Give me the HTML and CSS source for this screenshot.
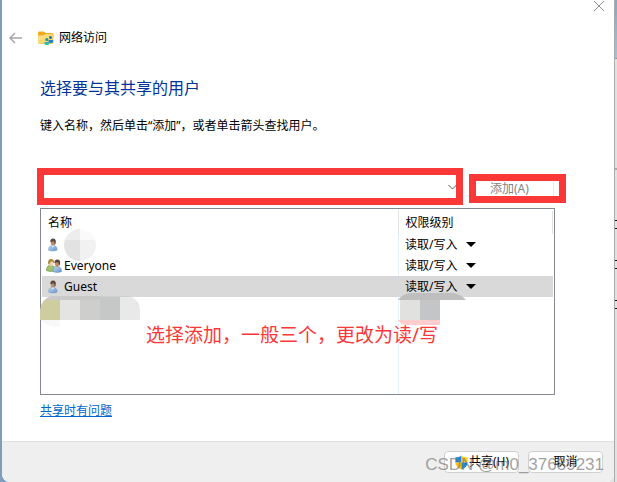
FILE: index.html
```html
<!DOCTYPE html>
<html lang="zh-CN">
<head>
    <meta charset="UTF-8">
    <meta name="viewport" content="width=device-width, initial-scale=1.0">
    <title>网络访问</title>
    <link rel="stylesheet" href="styles.css">
</head>
<body>
    <svg class="defs" width="0" height="0" aria-hidden="true">
        <defs>
            <linearGradient id="shirt" x1="0" y1="0" x2="1" y2="1">
                <stop offset="0" stop-color="#c3daf2"/>
                <stop offset="1" stop-color="#6193c8"/>
            </linearGradient>
            <linearGradient id="folder" x1="0" y1="0" x2="1" y2="1">
                <stop offset="0" stop-color="#ffe596"/>
                <stop offset="1" stop-color="#fbcb4c"/>
            </linearGradient>
            <symbol id="user" viewBox="0 0 16 16">
                <path d="M2.4 13c0-2.6 1.2-4 2.8-4.500h3.200c1.800.5 2.800 2 2.800 4.500-1.800 1.300-7 1.300-8.800 0z" fill="url(#shirt)" stroke="#7fa3c9" stroke-width=".5"/>
                <path d="M5.600 8.600l1.200 2 1.400-2z" fill="#f1f5fa"/>
                <ellipse cx="6.800" cy="5.600" rx="2" ry="3" fill="#c08a62"/>
                <path d="M4.300 5C4 2.800 5.400 1.500 7 1.500c2 0 3.100 1.400 2.800 3.900-.2 1.300-.6 2.200-1.300 2.800.1-1.900 0-3-.8-3.900-1 .4-2.200.5-3.400.7z" fill="#584840"/>
            </symbol>
            <symbol id="users" viewBox="0 0 16 16">
                <path d="M.5 12.500C.5 9.500 1.600 8 3.200 7.500h3c2 .5 3 2 3 5-2 1.200-6.700 1.200-8.700 0z" fill="#9fc46c" stroke="#5f8c3a" stroke-width=".6"/>
                <ellipse cx="5" cy="4.800" rx="2.400" ry="3.200" fill="#f0d3a8"/>
                <path d="M2.200 6C1.600 3 2.800 1 5 1s3.500 1.500 3 4c-.8-.4-1.500-1.200-1.800-2C5 4 3.500 4 3.300 6.800z" fill="#a9853c"/>
                <path d="M6.800 13.500c0-3 1.200-4.500 2.700-5h2.800c2 .5 3.200 2.200 3.200 5-2 1.200-6.700 1.200-8.700 0z" fill="url(#shirt)" stroke="#5b86b4" stroke-width=".5"/>
                <ellipse cx="11" cy="5.600" rx="2.200" ry="3.100" fill="#c08a62"/>
                <path d="M8.400 5C8.200 2.700 9.700 1.500 11.200 1.500c2.200 0 3.300 1.600 2.900 4-.2 1.200-.6 2-1.200 2.400.1-2-.3-3.200-1-3.900-1.200.5-2.300.8-3.500 1z" fill="#53403a"/>
            </symbol>
        </defs>
    </svg>

    <main class="dialog">
        <button class="close" aria-label="关闭">
            <svg width="12" height="12" viewBox="0 0 12 12"><path d="M1 1l10 10M11 1L1 11" stroke="#8c8c8c" fill="none"/></svg>
        </button>

        <header class="nav">
            <button class="back" aria-label="返回">
                <svg width="14" height="12" viewBox="0 0 14 12"><path d="M13 6H2M6 1L1 6l5 5" stroke="#a6a6a6" stroke-width="1.500" fill="none"/></svg>
            </button>
            <svg class="folder" width="17" height="16" viewBox="0 0 17 16">
                <path d="M1 3a1.500 1.500 0 0 1 1.500-1.500h4L8.500 3H15a1.500 1.500 0 0 1 1.500 1.500V7H1z" fill="#f0a91c"/>
                <path d="M1 5.500h5.500L8.500 4H15a1.500 1.500 0 0 1 1.500 1.500v7A1.500 1.500 0 0 1 15 14H2.500A1.500 1.500 0 0 1 1 12.500z" fill="url(#folder)"/>
                <circle cx="13.500" cy="7.500" r="1.500" fill="#1d6fc0"/>
                <path d="M11.500 10h4.700v1.500c0 2-4.700 2-4.700 0z" fill="#2380d2"/>
                <circle cx="9.800" cy="9.500" r="1.500" fill="#1695a3"/>
                <path d="M7.500 12h4.700v1.500c0 2-4.700 2-4.700 0z" fill="#28bcae"/>
            </svg>
            <span>网络访问</span>
        </header>

        <section class="content">
            <h1>选择要与其共享的用户</h1>
            <label class="hint" for="user-name">键入名称，然后单击“添加”，或者单击箭头查找用户。</label>

            <div class="picker">
                <div class="mark mark-name">
                    <select id="user-name"><option></option></select>
                    <svg class="chevron" width="9" height="6" viewBox="0 0 9 6"><path d="M.5 1l4 4 4-4" stroke="#555" fill="none"/></svg>
                </div>
                <div class="mark mark-add">
                    <button class="add" disabled>添加(A)</button>
                </div>
            </div>

            <div class="list">
                <table>
                    <colgroup><col class="col-name"><col></colgroup>
                    <thead>
                        <tr><th>名称</th><th>权限级别</th></tr>
                    </thead>
                    <tbody>
                        <tr>
                            <td><div class="name"><svg width="16" height="16"><use href="#user"/></svg></div></td>
                            <td><button class="level">读取/写入<i></i></button></td>
                        </tr>
                        <tr>
                            <td><div class="name"><svg width="16" height="16"><use href="#users"/></svg>Everyone</div></td>
                            <td><button class="level">读取/写入<i></i></button></td>
                        </tr>
                        <tr class="selected">
                            <td><div class="name"><svg width="16" height="16"><use href="#user"/></svg>Guest</div></td>
                            <td><button class="level">读取/写入<i></i></button></td>
                        </tr>
                    </tbody>
                </table>
                <!-- 打码区域 -->
                <svg class="blur blur-user" width="32" height="32" viewBox="0 0 32 32">
                    <clipPath id="round"><circle cx="16" cy="16" r="16"/></clipPath>
                    <g clip-path="url(#round)">
                        <path d="M0 0h16v11H0z" fill="#ededed"/>
                        <path d="M16 0h16v11H16z" fill="#fafafa"/>
                        <path d="M0 11h16v21H0z" fill="#e2e2e2"/>
                        <path d="M16 11h16v21H16z" fill="#f1f1f1"/>
                    </g>
                </svg>
                <svg class="blur blur-name" width="100" height="31" viewBox="0 0 100 31">
                    <clipPath id="name-top"><path d="M0 24V14Q2 2 12 0h78q10 4 10 14v10z"/></clipPath>
                    <path d="M1 24h19v7Q6 31 1 24z" fill="#f8f8f8"/>
                    <g clip-path="url(#name-top)">
                        <path d="M0 0h20v24H0z" fill="#cdcd9f"/>
                        <path d="M20 0h20v24H20z" fill="#e4e4e2"/>
                        <path d="M40 0h20v24H40z" fill="#cececd"/>
                        <path d="M60 0h20v24H60z" fill="#c5c8c7"/>
                        <path d="M80 0h20v24H80z" fill="#e9e9e9"/>
                        <path d="M0 0h60v4H0z" fill="#c9c9c9"/>
                        <path d="M60 0h40v1H60z" fill="#d0d0d0"/>
                    </g>
                </svg>
                <svg class="blur blur-level" width="68" height="34" viewBox="0 0 68 34">
                    <path d="M0 7Q5 0 14 0h42q8 2 12 7z" fill="#bebebe"/>
                    <path d="M2 7h20v20H2z" fill="#e1e1df"/>
                    <path d="M22 7h20v20H22z" fill="#c3c5c6"/>
                    <path d="M0 27h42v5H8q-5 0-8-5z" fill="#ffcdcd"/>
                </svg>
                <p class="note">选择添加，一般三个，更改为读/写</p>
            </div>

            <a class="help" href="#">共享时有问题</a>
        </section>

        <footer>
            <button class="action">
                <svg width="15" height="15" viewBox="0 0 16 16">
                    <path d="M8 .5C6 2 3.500 2.500 1.500 2.500V8H8z" fill="#1a86d9"/>
                    <path d="M8 .5c2 1.500 4.500 2 6.500 2V8H8z" fill="#ffd21f"/>
                    <path d="M1.500 8H8v7.500C4 14 1.500 11.500 1.500 8z" fill="#ffc20e"/>
                    <path d="M14.500 8H8v7.500c4-1.500 6.500-4 6.500-7.500z" fill="#1a86d9"/>
                </svg>共享(H)
            </button>
            <button class="action">取消</button>
            <span class="watermark">CSDN @m0_37689231</span>
        </footer>
    </main>

    <!-- 后面露出的窗口 -->
    <aside class="behind" aria-hidden="true">
        <div class="sky"></div>
        <div class="panel"></div>
        <div class="rows"><i></i><i></i><i></i></div>
    </aside>
</body>
</html>
```

FILE: styles.css
```css
* {
    box-sizing: border-box;
}
body {
    margin: 0;
    padding-left: 2px;
    display: flex;
    min-height: 100vh;
    background: linear-gradient(to right, #7f9ebb 50%, #e2e2e2 50%);
    font: 12px/16px "Noto Sans", "Noto Sans CJK SC", sans-serif;
    color: #000;
}
button, select {
    font: inherit;
    color: inherit;
    margin: 0;
    padding: 0;
    border: none;
    background: none;
}
svg {
    display: block;
    flex: none;
}
.defs {
    position: absolute;
}
.dialog {
    position: relative;
    flex: 1;
    display: flex;
    flex-direction: column;
    background: #fff;
    border-radius: 0 0 8px 8px;
    overflow: hidden;
}
.close {
    position: absolute;
    top: 0;
    right: 9px;
}
.nav {
    display: flex;
    align-items: center;
    padding: 30px 7px 0;
}
.folder {
    margin: 0 5px 0 14px;
}
.content {
    flex: 1;
    padding: 32px 59px 0 38px;
}
h1 {
    margin: 0 0 20px;
    font-size: 16px;
    line-height: 20px;
    font-weight: normal;
    color: #003399;
}
.hint {
    display: block;
}

/* 名称输入和添加按钮 */
.picker {
    display: flex;
    align-items: center;
    gap: 6px;
    margin: 34px -11px 3px -3px;
}
.mark {
    position: relative;
    border: 7px solid #fb3838;
}
.mark-name {
    flex: 1;
    height: 37px;
}
.mark-name select {
    display: block;
    width: 100%;
    height: 100%;
    appearance: none;
}
.chevron {
    position: absolute;
    right: -1px;
    top: 9px;
}
.mark-add {
    width: 97px;
    height: 29px;
    margin-top: 4px;
}
.add {
    display: block;
    width: 78px;
    height: 15px;
    padding-left: 14px;
    line-height: 12px;
    border-right: 1px solid #ececec;
    color: #838383;
    text-align: left;
    white-space: nowrap;
}

/* 用户列表 */
.list {
    position: relative;
    height: 187px;
    padding: 2px 1px;
    border: 1px solid #828790;
    background: linear-gradient(#e5f0fb, #e5f0fb) 357px 0 / 1px 100% no-repeat;
}
table {
    width: 100%;
    table-layout: fixed;
    border-collapse: collapse;
}
.col-name {
    width: 356px;
}
th, td {
    height: 21px;
    padding: 0 7px;
    text-align: left;
    font-weight: normal;
}
th {
    height: 23px;
    border-right: 1px solid #e3e3e3;
}
th:first-child {
    padding-left: 6px;
}
td:first-child {
    padding-left: 4px;
}
.name {
    display: flex;
    align-items: center;
    gap: 2px;
}
.level {
    display: flex;
    align-items: center;
    gap: 9px;
}
.level i {
    border: 5px solid transparent;
    border-top-color: #000;
    border-bottom: none;
}
.selected {
    background: #d9d9d9;
}
.blur {
    position: absolute;
}
.blur-user {
    left: 23px;
    top: 20px;
}
.blur-name {
    left: -1px;
    top: 87px;
}
.blur-level {
    left: 357px;
    top: 84px;
}
.note {
    position: absolute;
    left: 105px;
    top: 114px;
    margin: 0;
    font-size: 19px;
    line-height: 24px;
    color: #fb3838;
    white-space: nowrap;
}
.help {
    display: inline-block;
    margin-top: 8px;
    color: #0066cc;
}

/* 底部按钮 */
footer {
    position: relative;
    display: flex;
    justify-content: flex-end;
    gap: 9px;
    height: 41px;
    padding: 9px 11px 0;
    border-top: 1px solid #dfdfdf;
    background: #efefef;
}
.action {
    display: flex;
    align-items: center;
    justify-content: center;
    width: 75px;
    height: 22px;
    border: 1px solid #d0d0d0;
    border-radius: 4px;
    background: #fdfdfd;
}
.watermark {
    position: absolute;
    right: 10px;
    top: 13px;
    font: 17px/20px "Liberation Sans", Arial, sans-serif;
    color: rgba(120, 120, 120, 0.7);
    white-space: nowrap;
}

/* 右侧边缘 */
.behind {
    display: flex;
    flex-direction: column;
    width: 3px;
    border-left: 1px solid #ababab;
    background: #e2e2e2;
}
.sky {
    height: 58px;
    background: linear-gradient(#86a7c2, #a6c1d6);
}
.panel {
    height: 112px;
    border-top: 1px solid #8b9298;
    border-bottom: 2px solid #aaa;
}
.rows {
    display: grid;
    gap: 31px;
    padding-top: 50px;
}
.rows i {
    height: 9px;
    border: solid #111;
    border-width: 1px 0;
}
```
